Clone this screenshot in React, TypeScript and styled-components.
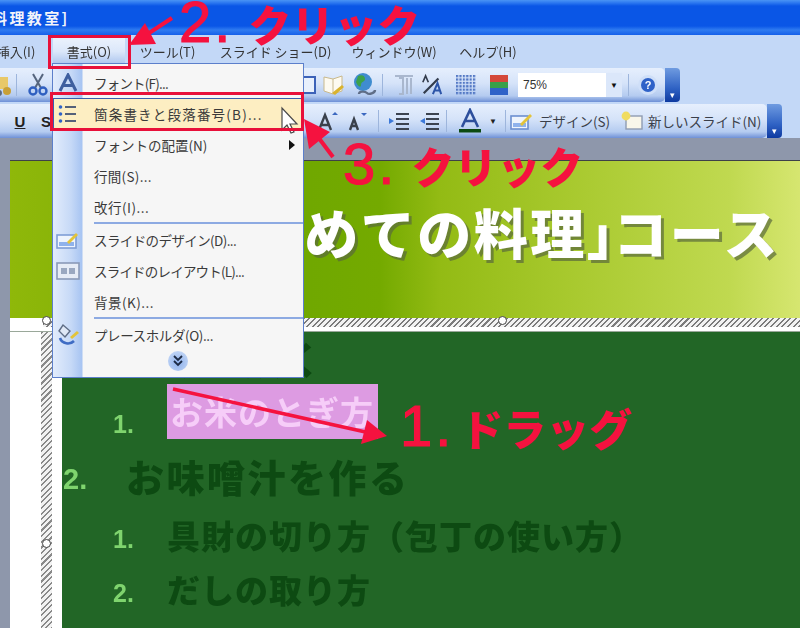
import React from 'react'
import styled, { createGlobalStyle } from 'styled-components'

const jp = `"Noto Sans CJK JP", "Liberation Sans", sans-serif`
const red = '#f5123f'

const Global = createGlobalStyle`
  html, body { margin: 0; padding: 0; background: #8e97ab; }
  body { font-family: ${jp}; }
`

const Root = styled.div`
  position: relative;
  width: 800px;
  height: 628px;
  overflow: hidden;
  display: flex;
  flex-direction: column;
  filter: blur(0.65px);
`

const TitleBar = styled.div`
  height: 35px;
  flex: none;
  overflow: hidden;
  display: flex;
  align-items: center;
  background: linear-gradient(180deg, #4a94f4 0, #2a76f0 3px, #0a56e6 6px, #0a56e6 26px, #2f7bf0 30px, #1560ea 35px);
`

const TitleText = styled.span`
  margin-left: -8px;
  color: #f2f4fa;
  font-size: 15px;
  font-weight: 700;
  letter-spacing: 2.4px;
  white-space: nowrap;
`

const MenuBar = styled.div`
  height: 33px;
  flex: none;
  display: flex;
  align-items: center;
  background: #c3d8f7;
`

const MenuEntry = styled.div<{ $w: number; $ml?: number; $active?: boolean }>`
  width: ${p => p.$w}px;
  margin-left: ${p => p.$ml ?? 0}px;
  flex: none;
  align-self: stretch;
  display: flex;
  align-items: center;
  justify-content: center;
  font-size: 13px;
  color: #333;
  white-space: nowrap;
  ${p => p.$active && 'background: linear-gradient(180deg, #eef4fd 0, #dbe7fa 50%, #9ebbea 100%);'}
`

const ToolRow = styled.div<{ $w: number }>`
  width: ${p => p.$w}px;
  height: 34px;
  flex: none;
  display: flex;
  align-items: center;
  position: relative;
  border-radius: 0 5px 5px 0;
  background: linear-gradient(180deg, #e6effd 0, #d5e3f9 45%, #b4cbf0 82%, #6e90d6 100%);
`

const RowGap = styled.div`
  height: 2px;
  flex: none;
  background: #c3d8f7;
`

const TopRows = styled.div`
  flex: none;
  background: #c3d8f7;
  display: flex;
  flex-direction: column;
`

const Slot = styled.div<{ $x: number; $w?: number }>`
  margin-left: ${p => p.$x}px;
  width: ${p => p.$w ?? 22}px;
  height: 24px;
  flex: none;
  display: flex;
  align-items: center;
  justify-content: center;
  font-family: "Liberation Sans", sans-serif;
`

const StyleGlyph = styled.b<{ $under?: boolean }>`
  font-size: 15px;
  color: #222;
  text-decoration: ${p => (p.$under ? 'underline' : 'none')};
`

const Caret = styled.span`
  font-size: 8px;
  color: #222;
`

const ToolSep = styled.div<{ $x: number }>`
  margin-left: ${p => p.$x}px;
  width: 1px;
  height: 22px;
  flex: none;
  background: #9db5dc;
`

const ToolLabel = styled.span<{ $x: number; $w: number }>`
  margin-left: ${p => p.$x}px;
  width: ${p => p.$w}px;
  flex: none;
  font-size: 13.5px;
  color: #3a3f4a;
  white-space: nowrap;
`

const Combo = styled.div<{ $x: number }>`
  margin-left: ${p => p.$x}px;
  width: 104px;
  height: 24px;
  flex: none;
  display: flex;
  align-items: center;
  justify-content: space-between;
  background: #fff;
  font-family: "Liberation Sans", sans-serif;
  font-size: 12px;
  color: #333;
  padding-left: 5px;
  box-sizing: border-box;
`

const ComboBtn = styled.div`
  width: 16px;
  height: 24px;
  display: flex;
  align-items: center;
  justify-content: center;
  background: #dbe7fa;
  color: #111;
  font-size: 8px;
`

const Grip = styled.div`
  position: absolute;
  right: -15px;
  top: 0;
  width: 15px;
  height: 100%;
  border-radius: 0 4px 4px 0;
  background: linear-gradient(180deg, #6f9be0 0, #2f62c4 60%, #0e3aa0 100%);
  display: flex;
  align-items: flex-end;
  justify-content: center;
  color: #fff;
  font-size: 9px;
  line-height: 14px;
`

const Workspace = styled.div`
  flex: 1;
  min-height: 0;
  display: flex;
`

const SideStrip = styled.div`
  width: 10px;
  flex: none;
  background: #8e97ab;
`

const SlideColumn = styled.div`
  flex: 1;
  display: flex;
  flex-direction: column;
`

const TopGap = styled.div`
  height: 22px;
  flex: none;
  background: #8e97ab;
  border-bottom: 1px solid #3e4148;
`

const SlideHeader = styled.div`
  height: 157px;
  flex: none;
  display: flex;
  justify-content: flex-end;
  padding: 35px 20px 0 0;
  box-sizing: border-box;
  background: linear-gradient(90deg, #8fb80a 0, #79aa04 200px, #70a800 300px, #74aa00 370px, #93bb14 430px, #a8c92e 560px, #c0d950 720px, #d6e670 790px);
`

const SlideTitle = styled.h1`
  margin: 0;
  color: #fff;
  font-size: 54px;
  line-height: 72px;
  font-weight: 900;
  white-space: nowrap;
  letter-spacing: 2.5px;
  text-shadow: 3px 3px 0 rgba(90, 105, 60, 0.7);
`

const TightBracket = styled.span`
  margin-right: -30px;
`

const SelectBand = styled.div`
  height: 14px;
  flex: none;
  background: #fff;
  padding-left: 33px;
  box-sizing: border-box;
  border-bottom: 1px solid #9aa89a;
`

const Hatch = styled.div`
  height: 9px;
  background: repeating-linear-gradient(135deg, #7c7c7c 0 1.5px, #f2f2f2 1.5px 4px);
`

const SlideBody = styled.div`
  flex: 1;
  min-height: 0;
  display: flex;
`

const Margin = styled.div`
  width: 52px;
  flex: none;
  background: #fff;
  padding-left: 31px;
  box-sizing: border-box;
`

const HatchColumn = styled.div`
  width: 11px;
  height: 100%;
  background: repeating-linear-gradient(135deg, #8a8a8a 0 1.5px, #f2f2f2 1.5px 4px);
`

const GreenPanel = styled.div`
  flex: 1;
  background: #226626;
`

const Row = styled.div<{ $sub?: boolean; $h: number; $low?: boolean }>`
  height: ${p => p.$h}px;
  display: flex;
  align-items: ${p => (p.$low ? 'flex-end' : 'center')};
  padding-left: ${p => (p.$sub ? 51 : 1)}px;
`

const Num = styled.span<{ $sub?: boolean }>`
  width: ${p => (p.$sub ? 54 : 63)}px;
  flex: none;
  margin-top: 8px;
  font-family: "Liberation Sans", sans-serif;
  font-weight: 700;
  font-size: ${p => (p.$sub ? 25 : 29)}px;
  line-height: 30px;
  color: #7fd46e;
`

const RowText = styled.span<{ $sub?: boolean; $track?: number }>`
  font-size: ${p => (p.$sub ? 33 : 38)}px;
  letter-spacing: ${p => p.$track ?? (p.$sub ? 1 : 2.5)}px;
  font-weight: 900;
  color: #0d4a12;
  white-space: nowrap;
`

const Picked = styled.span`
  display: inline-block;
  width: 211px;
  height: 55px;
  line-height: 55px;
  padding-left: 3px;
  box-sizing: border-box;
  background: #dd9be2;
  color: #f6cdf8;
  font-size: 33px;
  letter-spacing: 1px;
  font-weight: 700;
  white-space: nowrap;
  overflow: hidden;
`

const Handle = styled.div<{ $x: number; $y: number }>`
  position: absolute;
  left: ${p => p.$x - 4}px;
  top: ${p => p.$y - 4}px;
  width: 7px;
  height: 7px;
  border-radius: 50%;
  border: 1px solid #444;
  background: #fff;
`

const Menu = styled.div`
  position: absolute;
  left: 52px;
  top: 63px;
  width: 252px;
  height: 315px;
  box-sizing: border-box;
  padding-top: 3px;
  border: 1.5px solid #5c7fcb;
  background: linear-gradient(90deg, #e2ecfc 0, #c6d9f7 18px, #a7c4f2 29px, #f6f6f6 30px);
`

const Item = styled.div<{ $hot?: boolean }>`
  position: relative;
  height: 31px;
  display: flex;
  align-items: center;
  font-size: 13.5px;
  color: #3a3a3a;
  white-space: nowrap;
  ${p => p.$hot && 'background: #fdeec2; outline: 1px solid #3a5db0; outline-offset: -1px;'}
`

const ItemIcon = styled.div`
  width: 30px;
  flex: none;
  display: flex;
  align-items: center;
  justify-content: center;
`

const ItemLabel = styled.span<{ $track?: number }>`
  margin-left: 11px;
  letter-spacing: ${p => p.$track ?? 0}px;
`

const SubArrow = styled.span`
  position: absolute;
  right: 8px;
  width: 0;
  height: 0;
  border-left: 6px solid #111;
  border-top: 5px solid transparent;
  border-bottom: 5px solid transparent;
`

const MenuSep = styled.div`
  height: 2px;
  margin-left: 41px;
  background: #8daae2;
`

const More = styled.div`
  height: 22px;
  display: flex;
  align-items: center;
  justify-content: center;
`

const MoreBall = styled.div`
  width: 20px;
  height: 20px;
  border-radius: 50%;
  background: radial-gradient(circle at 50% 60%, #8fb2ec, #cfdff8);
  display: flex;
  align-items: center;
  justify-content: center;
`

const RedBox = styled.div<{ $x: number; $y: number; $w: number; $h: number }>`
  position: absolute;
  left: ${p => p.$x}px;
  top: ${p => p.$y}px;
  width: ${p => p.$w}px;
  height: ${p => p.$h}px;
  box-sizing: border-box;
  border: 3px solid #e8103a;
`

const Callout = styled.div<{ $x: number; $y: number }>`
  position: absolute;
  left: ${p => p.$x}px;
  top: ${p => p.$y}px;
  display: flex;
  align-items: baseline;
  color: ${red};
  white-space: nowrap;
`

const Digit = styled.span<{ $gap: number }>`
  font-family: "Liberation Sans", sans-serif;
  font-size: 58px;
  line-height: 60px;
  -webkit-text-stroke: 1.2px ${red};
  letter-spacing: 3px;
  margin-right: ${p => p.$gap}px;
`

const Kana = styled.span`
  font-size: 43px;
  line-height: 60px;
  font-weight: 900;
`

const Overlay = styled.svg`
  position: absolute;
  left: 0;
  top: 0;
  pointer-events: none;
`

const Scissors = () => (
  <svg width="20" height="24" viewBox="0 0 20 24" fill="none">
    <path d="M5 1l8 14M15 1L7 15" stroke="#55657e" strokeWidth="2" />
    <circle cx="5" cy="18" r="3.5" stroke="#2f5fc0" strokeWidth="2.4" />
    <circle cx="15" cy="18" r="3.5" stroke="#2f5fc0" strokeWidth="2.4" />
  </svg>
)

const Paste = () => (
  <svg width="20" height="24" viewBox="0 0 20 24">
    <rect x="-6" y="4" width="18" height="12" fill="#e8c868" />
    <circle cx="11" cy="18" r="4" fill="#c8a038" />
    <circle cx="3" cy="20" r="3" fill="#5b6a80" />
  </svg>
)

const TableIcon = () => (
  <svg width="18" height="22" viewBox="0 0 18 22">
    <rect x="1" y="3" width="16" height="16" fill="#e8f0fc" stroke="#3c62b8" strokeWidth="2" />
  </svg>
)

const BookPencil = () => (
  <svg width="24" height="24" viewBox="0 0 24 24">
    <path d="M2 4l9 2 9-3v15l-9 3-9-3z" fill="#fdfaf0" stroke="#c9b98c" />
    <path d="M11 6v15" stroke="#c9b98c" />
    <path d="M10 20l10-8 2 2-9 8z" fill="#d9b32e" />
  </svg>
)

const Globe = () => (
  <svg width="24" height="26" viewBox="0 0 24 26">
    <circle cx="10" cy="10" r="9" fill="#3f8ccf" />
    <path d="M5 4c4-2 7 0 7 3s-4 2-4 6-4 0-5-3z" fill="#3ca24a" />
    <path d="M6 22c0-3 6-3 8-1s8 0 8-3" fill="none" stroke="#5f6d86" strokeWidth="2.4" />
  </svg>
)

const Ruled = () => (
  <svg width="22" height="24" viewBox="0 0 22 24">
    <path d="M2 3h18M6 5h4v16H6M14 5v16M18 5v16" fill="none" stroke="#a9b7ce" strokeWidth="2" />
  </svg>
)

const SlashA = () => (
  <svg width="24" height="24" viewBox="0 0 24 24">
    <path d="M3 21L19 5" stroke="#333c4c" strokeWidth="2.4" />
    <path d="M2 9l3-7 3 7" fill="none" stroke="#333c4c" strokeWidth="1.8" />
    <path d="M13 22l5-12 4 12M15 18h6" fill="none" stroke="#2d55a8" strokeWidth="2.2" />
  </svg>
)

const GridIcon = () => (
  <svg width="20" height="20" viewBox="0 0 20 20">
    <defs>
      <pattern id="dots" width="3.4" height="3.4" patternUnits="userSpaceOnUse">
        <rect width="2.2" height="2.2" fill="#5277c4" />
      </pattern>
    </defs>
    <rect width="20" height="20" fill="url(#dots)" />
  </svg>
)

const ColorIcon = () => (
  <svg width="18" height="20" viewBox="0 0 18 20">
    <rect width="18" height="7" fill="#d4483a" />
    <rect y="7" width="18" height="6" fill="#38a04a" />
    <rect y="13" width="18" height="7" fill="#2f62c8" />
  </svg>
)

const Help = () => (
  <svg width="22" height="22" viewBox="0 0 22 22">
    <circle cx="11" cy="11" r="10" fill="#cfdff8" />
    <circle cx="11" cy="11" r="7" fill="#2f62c8" />
    <text x="11" y="15" textAnchor="middle" fontSize="11" fontWeight="700" fill="#fff" fontFamily="Liberation Sans">?</text>
  </svg>
)

const Indent = ({ flip }: { flip?: boolean }) => (
  <svg width="22" height="20" viewBox="0 0 22 20">
    <path d="M8 3h13M8 8h13M8 13h13M8 18h13" stroke="#3b4350" strokeWidth="2" />
    <path d={flip ? 'M7 7v6l-5-3z' : 'M1 7v6l5-3z'} fill="#3b78d8" />
  </svg>
)

const ColorA = () => (
  <svg width="22" height="26" viewBox="0 0 22 26">
    <path d="M3 19L11 2l8 17M6 13h10" fill="none" stroke="#2d4f9c" strokeWidth="2.6" />
    <rect y="21" width="22" height="3.5" fill="#0c4a12" />
  </svg>
)

const SizeA = ({ up }: { up?: boolean }) => (
  <svg width="22" height="22" viewBox="0 0 22 22">
    <path d={up ? 'M2 20l6-15 6 15M5 15h6' : 'M4 20l4-11 4 11M6 16h4'} fill="none" stroke="#3a414c" strokeWidth="2.4" />
    <path d={up ? 'M15 5l3-3 3 3z' : 'M15 3h6l-3 3z'} fill="#3b68c0" />
  </svg>
)

const DesignIcon = () => (
  <svg width="24" height="20" viewBox="0 0 24 20">
    <rect x="1" y="5" width="17" height="13" fill="#eef4fd" stroke="#6c8fd0" strokeWidth="1.6" />
    <rect x="3" y="12" width="13" height="4" fill="#8fb2ec" />
    <path d="M10 13l10-10 2 2-10 10z" fill="#e3c43a" />
  </svg>
)

const NewSlide = () => (
  <svg width="24" height="20" viewBox="0 0 24 20">
    <rect x="7" y="5" width="16" height="13" fill="#f8f6ea" stroke="#8f9cb2" strokeWidth="1.4" />
    <circle cx="7" cy="5" r="4.4" fill="#f0dc60" />
  </svg>
)

const ListIcon = () => (
  <svg width="20" height="20" viewBox="0 0 20 20">
    <path d="M7 3h11M7 10h11M7 17h11" stroke="#55617a" strokeWidth="2" />
    <circle cx="2.5" cy="3" r="1.8" fill="#2f62c8" />
    <circle cx="2.5" cy="10" r="1.8" fill="#2f62c8" />
    <circle cx="2.5" cy="17" r="1.8" fill="#2f62c8" />
  </svg>
)

const FontA = () => (
  <svg width="20" height="20" viewBox="0 0 20 20">
    <path d="M2 18L10 2l8 16M5.5 12.5h9" fill="none" stroke="#3f5f9f" strokeWidth="3" />
  </svg>
)

const SlideDesign = () => (
  <svg width="24" height="20" viewBox="0 0 24 20">
    <rect x="1" y="5" width="19" height="13" fill="#eef4fd" stroke="#7f9ed6" strokeWidth="1.6" />
    <rect x="3" y="12" width="15" height="4" fill="#8fb2ec" />
    <path d="M11 12l9-9 2 2-9 9z" fill="#e3c43a" />
  </svg>
)

const SlideLayout = () => (
  <svg width="24" height="20" viewBox="0 0 24 20">
    <rect x="1" y="2" width="22" height="16" fill="#e6ecf6" stroke="#8a9ab8" strokeWidth="1.6" />
    <rect x="5" y="7" width="6" height="6" fill="#9aa8c0" />
    <rect x="13" y="7" width="6" height="6" fill="#9aa8c0" />
  </svg>
)

const Placeholder = () => (
  <svg width="24" height="24" viewBox="0 0 24 24">
    <path d="M7 2l7 6-5 6-6-6z" fill="#dfe8f6" stroke="#5f6d86" strokeWidth="1.4" />
    <path d="M4 15c2 6 10 7 14 3" fill="none" stroke="#3f6cc4" strokeWidth="2.6" />
    <path d="M14 14l7-6 2 2-7 6z" fill="#e3c43a" />
  </svg>
)

const Chevrons = () => (
  <svg width="10" height="12" viewBox="0 0 10 12">
    <path d="M1 1l4 4 4-4M1 6l4 4 4-4" fill="none" stroke="#1c2a44" strokeWidth="1.8" />
  </svg>
)

const Cursor = () => (
  <Overlay width="800" height="628" viewBox="0 0 800 628">
    <path d="M282 108v22l5-5 4 8 3-1-4-8h7z" fill="#fff" stroke="#4a4a4a" strokeWidth="1.2" />
  </Overlay>
)

const Arrows = () => (
  <Overlay width="800" height="628" viewBox="0 0 800 628">
    <g stroke={red} strokeWidth="4" fill={red}>
      <line x1="172" y1="18" x2="140" y2="39" />
      <line x1="333" y1="157" x2="312" y2="129" />
      <line x1="173" y1="389" x2="370" y2="433" strokeWidth="3.5" />
    </g>
    <g fill={red}>
      <polygon points="129,45 145,23 156,44" />
      <polygon points="304,119 330,132 309,149" />
      <polygon points="387,436 361,444 367,420" />
    </g>
  </Overlay>
)

export default function App() {
  return (
    <Root>
      <Global />
      <TitleBar>
        <TitleText>料理教室]</TitleText>
      </TitleBar>
      <MenuBar>
        <MenuEntry $w={48} $ml={-8}>挿入(I)</MenuEntry>
        <MenuEntry $w={72} $ml={13} $active>書式(O)</MenuEntry>
        <MenuEntry $w={83} $ml={1}>ツール(T)</MenuEntry>
        <MenuEntry $w={133}>スライド ショー(D)</MenuEntry>
        <MenuEntry $w={104}>ウィンドウ(W)</MenuEntry>
        <MenuEntry $w={84}>ヘルプ(H)</MenuEntry>
      </MenuBar>
      <TopRows>
        <ToolRow $w={665}>
          <Slot $x={-4} $w={20}><Paste /></Slot>
          <ToolSep $x={0} />
          <Slot $x={10}><Scissors /></Slot>
          <Slot $x={249} $w={18}><TableIcon /></Slot>
          <Slot $x={5} $w={26}><BookPencil /></Slot>
          <Slot $x={5} $w={26}><Globe /></Slot>
          <ToolSep $x={4} />
          <Slot $x={9} $w={24}><Ruled /></Slot>
          <Slot $x={5}><SlashA /></Slot>
          <Slot $x={12}><GridIcon /></Slot>
          <Slot $x={12} $w={20}><ColorIcon /></Slot>
          <Combo $x={9}>75%<ComboBtn>▼</ComboBtn></Combo>
          <ToolSep $x={6} />
          <Slot $x={7} $w={24}><Help /></Slot>
          <Grip>▾</Grip>
        </ToolRow>
        <RowGap />
        <ToolRow $w={767}>
          <Slot $x={9} $w={22}><StyleGlyph $under>U</StyleGlyph></Slot>
          <Slot $x={4} $w={22}><StyleGlyph>S</StyleGlyph></Slot>
          <Slot $x={260}><SizeA up /></Slot>
          <Slot $x={7}><SizeA /></Slot>
          <ToolSep $x={10} />
          <Slot $x={8} $w={24}><Indent /></Slot>
          <Slot $x={6} $w={24}><Indent flip /></Slot>
          <ToolSep $x={5} />
          <Slot $x={12}><ColorA /></Slot>
          <Slot $x={5} $w={14}><Caret>▼</Caret></Slot>
          <ToolSep $x={5} />
          <Slot $x={3} $w={26}><DesignIcon /></Slot>
          <ToolLabel $x={4} $w={79}>デザイン(S)</ToolLabel>
          <Slot $x={0} $w={26}><NewSlide /></Slot>
          <ToolLabel $x={4} $w={110}>新しいスライド(N)</ToolLabel>
          <Grip>▾</Grip>
        </ToolRow>
      </TopRows>
      <Workspace>
        <SideStrip />
        <SlideColumn>
          <TopGap />
          <SlideHeader>
            <SlideTitle>「初めての料理<TightBracket>」</TightBracket>コース</SlideTitle>
          </SlideHeader>
          <SelectBand><Hatch /></SelectBand>
          <SlideBody>
            <Margin><HatchColumn /></Margin>
            <GreenPanel>
              <Row $h={51}>
                <Num>1.</Num>
                <RowText $track={1.2}>ご飯を炊く</RowText>
              </Row>
              <Row $sub $low $h={56}>
                <Num $sub>1.</Num>
                <Picked>お米のとぎ方</Picked>
              </Row>
              <Row $h={72}>
                <Num>2.</Num>
                <RowText>お味噌汁を作る</RowText>
              </Row>
              <Row $sub $h={48}>
                <Num $sub>1.</Num>
                <RowText $sub>具財の切り方（包丁の使い方）</RowText>
              </Row>
              <Row $sub $h={60}>
                <Num $sub>2.</Num>
                <RowText $sub>だしの取り方</RowText>
              </Row>
            </GreenPanel>
          </SlideBody>
        </SlideColumn>
      </Workspace>

      <Handle $x={46} $y={320} />
      <Handle $x={46} $y={543} />
      <Handle $x={502} $y={320} />

      <Menu>
        <Item><ItemIcon><FontA /></ItemIcon><ItemLabel $track={-0.8}>フォント(F)...</ItemLabel></Item>
        <Item $hot><ItemIcon><ListIcon /></ItemIcon><ItemLabel $track={1.2}>箇条書きと段落番号(B)...</ItemLabel></Item>
        <Item><ItemIcon /><ItemLabel>フォントの配置(N)</ItemLabel><SubArrow /></Item>
        <Item><ItemIcon /><ItemLabel $track={0.3}>行間(S)...</ItemLabel></Item>
        <Item><ItemIcon /><ItemLabel $track={0.5}>改行(I)...</ItemLabel></Item>
        <MenuSep />
        <Item><ItemIcon><SlideDesign /></ItemIcon><ItemLabel $track={-0.6}>スライドのデザイン(D)...</ItemLabel></Item>
        <Item><ItemIcon><SlideLayout /></ItemIcon><ItemLabel $track={-0.8}>スライドのレイアウト(L)...</ItemLabel></Item>
        <Item><ItemIcon /><ItemLabel $track={0.5}>背景(K)...</ItemLabel></Item>
        <MenuSep />
        <Item><ItemIcon><Placeholder /></ItemIcon><ItemLabel $track={-0.4}>プレースホルダ(O)...</ItemLabel></Item>
        <More><MoreBall><Chevrons /></MoreBall></More>
      </Menu>

      <Cursor />
      <RedBox $x={48} $y={35} $w={83} $h={34} />
      <RedBox $x={50} $y={92} $w={254} $h={39} />
      <Arrows />

      <Callout $x={179} $y={-8}>
        <Digit $gap={15}>2.</Digit>
        <Kana>クリック</Kana>
      </Callout>
      <Callout $x={343} $y={134}>
        <Digit $gap={14}>3.</Digit>
        <Kana>クリック</Kana>
      </Callout>
      <Callout $x={400} $y={396}>
        <Digit $gap={6}>1.</Digit>
        <Kana>ドラッグ</Kana>
      </Callout>
    </Root>
  )
}
